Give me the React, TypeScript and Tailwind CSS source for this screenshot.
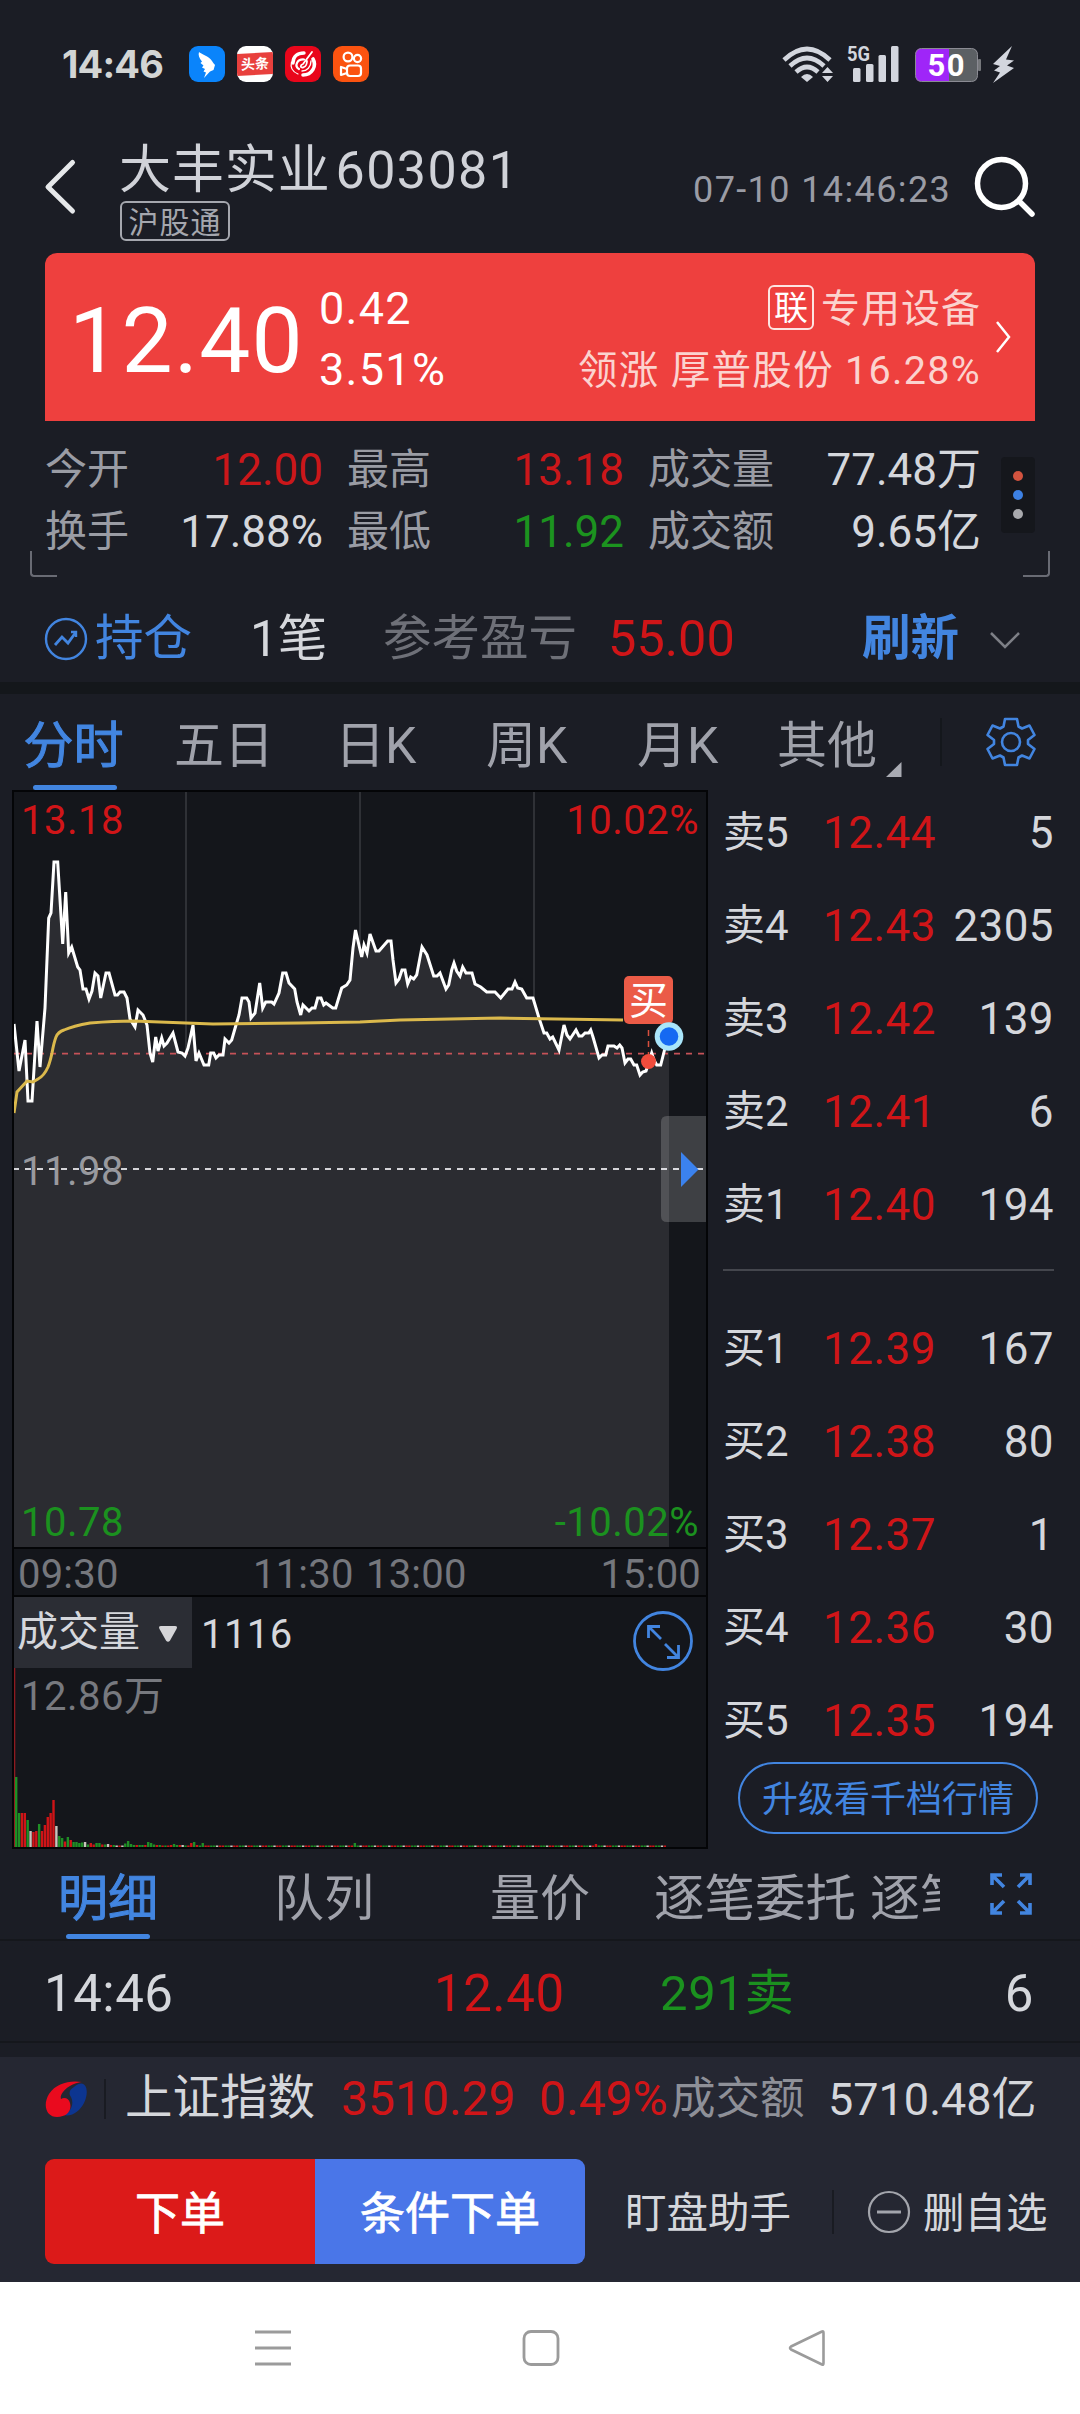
import { ReactNode } from 'react'

const sells = [
  ['卖5', '12.44', '5'],
  ['卖4', '12.43', '2305'],
  ['卖3', '12.42', '139'],
  ['卖2', '12.41', '6'],
  ['卖1', '12.40', '194'],
]

const buys = [
  ['买1', '12.39', '167'],
  ['买2', '12.38', '80'],
  ['买3', '12.37', '1'],
  ['买4', '12.36', '30'],
  ['买5', '12.35', '194'],
]

const PRICE =
  '14,1024 19,1071 25,1040 28,1101 32,1101 37,1021 40,1067 45,1008 48.7,918 51,913 54,862 57.7,862 62.7,944 65.7,892 68.7,953 71.7,947 77.7,967 80,970 83,989 86,989 89,999 92,991 95,973 98,976 100.7,998 106,973 109,973 115,995 117.5,995 120,992 124,992 127,998 130,1019 135,1027 138,1010 143,1015 147,1025 150,1053 152.7,1062 155.7,1037 158,1051 161.7,1038 164,1046 167,1043 173,1033 178,1052 182,1053 185,1056 188,1048 193,1025 196,1061 199,1053 204,1065 208.7,1065 210.7,1053 213.7,1053 216,1058 219,1055 223,1055 225,1039 229,1043 231.7,1040 236,1025 239,1015 242,998 246.7,998 249,1002 251,1018 255,1013 259.7,983 262.7,1008 265.7,1002 271.7,1002 274,1004 279,993 282.7,973 286,973 289,983 294.7,989 297,1002 300.7,1015 303,1005 309,1011 312,1008 315,1008 317.7,998 321,998 323.7,1005 326,1003 332.7,1008 335.7,1008 341.7,988 346.7,985 350,980 353,948 355.5,930 361.7,957 364,945 367,953 370,934 376,951 379,951 387.7,941 391,941 393,960 396,983 399,979 402,970 405,970 407.7,984 410.7,977 413.7,979 416.7,975 422,947 427,955 433.7,976 437,976 440,973 446,989 448.7,985 451.7,970 454,963 456.7,971 460,976 462.7,967 466,973 472,973 475,984 480.7,987 486.7,992 495,992 500.7,998 508,989 512,989 515,982 517.7,988 521.7,989 526.7,998 533,998 539,1018 544,1033 546.7,1033 550,1039 552.7,1037 559,1050 564,1025 567,1035 570,1039 576,1030 579,1036 582,1036 585,1033 588.7,1033 590.7,1030 593,1037 599,1058 602,1055 605.7,1055 608,1046 614,1046 617,1048 619.7,1045 622,1048 625,1063 628,1059 630.7,1059 634,1065 636.7,1065 640,1075 642.7,1072 646,1071 648,1065 651.7,1053 654,1060 656.7,1065 660.7,1065 664,1052 667,1040 669,1036'

const AVERAGE =
  'M14 1113L17 1092L27 1081L33 1082L38 1079Q44 1076 48 1067Q50 1062 52 1053Q54 1042 56 1037Q58 1032 64 1030Q73 1026 90 1023Q115 1021 133 1021L213 1024L300 1023L360 1022L400 1020L500 1018L623 1020'

// g = down, r = up, w = flat
const volume: [number, string][] = [
  [70, 'g'], [34, 'g'], [34, 'r'], [34, 'r'], [27, 'g'], [16, 'w'], [15, 'r'], [16, 'r'],
  [23, 'g'], [16, 'r'], [22, 'r'], [30, 'r'], [34, 'r'], [47, 'r'], [21, 'w'], [11, 'g'],
  [9, 'g'], [5.5, 'r'], [10, 'g'], [7, 'r'], [5, 'g'], [5, 'g'], [4, 'g'], [4.5, 'g'],
  [5, 'w'], [2.5, 'g'], [4, 'r'], [2.5, 'r'], [4, 'g'], [4, 'g'], [2.5, 'r'], [2.5, 'g'],
  [3, 'w'], [2, 'r'], [2, 'g'], [1.5, 'w'], [1.5, 'r'], [1.5, 'w'], [3.5, 'g'], [6, 'g'],
  [3, 'g'], [2, 'g'], [2, 'r'], [2, 'g'], [2, 'g'], [2, 'r'], [5, 'g'], [4, 'g'], [2.5, 'g'],
  [2, 'r'], [2, 'g'], [1.5, 'r'], [1.5, 'g'], [1.5, 'r'], [2, 'r'], [3, 'g'], [2, 'g'],
  [2, 'r'], [2, 'w'], [1.5, 'g'], [1.5, 'r'], [4, 'r'], [5, 'g'], [2, 'r'], [1.5, 'g'], [4, 'g'],
]
const TAIL = 'wgrwgrrrgwwrggrwggwrrgwgrwgggrrgrwg'
const volumeColor: Record<string, string> = { g: '#1f8f25', r: '#cf1417', w: '#c9c4bd' }

const volumeBars = Array.from({ length: 227 }, (_, i) => {
  const [h, c] = volume[i] ?? [i === 118 ? 4 : i === 202 ? 3 : 1.5, TAIL[(i * 7) % TAIL.length]]
  return { x: 15 + i * 2.87, h, color: volumeColor[c] }
})

function StatusBar() {
  return (
    <div className="flex h-32 items-center pl-[62px] pr-[64px]">
      <span className="w-[127px] font-['Inter'] text-[38px] leading-none font-bold tracking-[-0.8px] text-[#d3d5d4]">14:46</span>
      <div className="flex gap-3">
        <svg className="size-9" viewBox="0 0 36 36">
          <rect width="36" height="36" rx="9" fill="#0a84fb" />
          <path d="M10 6C12 8 20 10 23 15C24 17 25.500 18 26 19L24.500 24L21 25.500L15 32L17 26.500L14.500 25.500L16 23L13 21.500L14.500 19.500L11.500 17L13 15.500C10 12 9 9 10 6Z" fill="#fff" />
        </svg>
        <div className="flex size-9 items-center overflow-hidden rounded-[9px] bg-white">
          <div className="flex h-[22px] w-full -skew-y-3 items-center justify-center bg-[#e8403d] text-[14px] leading-none font-bold text-white">头条</div>
        </div>
        <svg className="size-9" viewBox="0 0 36 36" fill="none" stroke="#fff" strokeLinecap="round">
          <rect width="36" height="36" rx="9" fill="#e9061b" stroke="none" />
          <path d="M8 17C8 10 13 7 19 7" strokeWidth="3.400" />
          <path d="M6.500 16C5 22 8 26 13 28" strokeWidth="1.200" />
          <path d="M14 23C9 20 12 13 19 13.500" strokeWidth="2.200" />
          <path d="M27 6L18 18C15 19 15 22 18 21.500C21 21 22 17 22 15" strokeWidth="1.800" />
          <path d="M28 13C32 20 27 29 18 29" strokeWidth="3.600" />
          <path d="M26 15C26 21 22 25 17 25" strokeWidth="1.400" />
        </svg>
        <svg className="size-9" viewBox="0 0 36 36" fill="none" stroke="#fff" strokeWidth="2.200">
          <rect width="36" height="36" rx="9" fill="#fb5310" stroke="none" />
          <circle cx="15" cy="11" r="4.400" />
          <circle cx="24.500" cy="12.500" r="3.600" />
          <rect x="14" y="19.500" width="14" height="10.500" rx="3" />
          <path d="M14 23L8 21V29L14 27" strokeLinejoin="round" />
        </svg>
      </div>
      <svg className="ml-auto h-[60px] w-[234px]" viewBox="782 34 234 60" fill="#d3d6de">
        <g fill="none" stroke="#d3d6de" strokeWidth="4.600">
          <path d="M784 60Q807 38 830 60" />
          <path d="M790 66Q807 50 824 66" />
          <path d="M796 72Q807 62 818 72" />
        </g>
        <path d="M801 77Q807 71 813 77L807 82Z" />
        <path d="M822 73L827.500 67L833 73ZM822 76H833L827.500 82Z" />
        <text x="847" y="60.500" fontSize="20" fontWeight="700" textLength="23" lengthAdjust="spacingAndGlyphs" fontFamily="Roboto">5G</text>
        <rect x="853" y="68" width="7.500" height="14" rx="1.500" />
        <rect x="866" y="64" width="7.500" height="18" rx="1.500" />
        <rect x="878.500" y="55" width="7.500" height="27" rx="1.500" />
        <rect x="891" y="46" width="7.500" height="36" rx="1.500" />
        <path d="M921 48.500H949V81.500H921Q915.500 81.500 915.500 76V54Q915.500 48.500 921 48.500Z" fill="#9f25f8" />
        <path d="M949 48.500H972Q977.500 48.500 977.500 54V76Q977.500 81.500 972 81.500H949Z" fill="#5c6064" />
        <rect x="915.500" y="48.500" width="62" height="33" rx="6" fill="none" stroke="#8b8b93" />
        <rect x="978" y="59" width="3" height="12" rx="1" fill="#75777b" />
        <text x="927.500" y="76" fontSize="31" fontWeight="700" fill="#fff" textLength="37" fontFamily="Roboto">50</text>
        <path d="M1012 46L993 64L1000 66L994 70.500L1000 72.500L993 83L1014 68L1007 65.500L1014 60.500L1006 59.500Z" />
      </svg>
    </div>
  )
}

function Header() {
  return (
    <div className="flex h-[125px] pl-[43px]">
      <svg className="mt-[29px] h-[60px] w-[76px]" viewBox="0 0 76 60" fill="none" stroke="#e6e8ea" strokeWidth="5" strokeLinecap="round" strokeLinejoin="round">
        <path d="M29.500 5.500L5 30L29.500 54" />
      </svg>
      <div className="mt-[17px] flex w-[574px] flex-col items-start">
        <h1 className="text-[52px] leading-none tracking-[0.9px] whitespace-nowrap text-[#d0d2d8]">
          大丰实业<span className="ml-[5px] tracking-[1.4px]">603081</span>
        </h1>
        <span className="mt-1 ml-[1px] flex h-10 w-[110px] items-center justify-center rounded-md border-2 border-[#a5a7ae] pt-[3px] text-[30px] leading-none tracking-[1px] text-[#a5a7ae]">沪股通</span>
      </div>
      <span className="mt-[44px] w-[279px] text-[36px] leading-none tracking-[1.4px] whitespace-nowrap text-[#9a9ca5]">07-10 14:46:23</span>
      <svg className="mt-[27px] size-[64px]" viewBox="972 155 64 64" fill="none" stroke="#fff" strokeLinecap="round">
        <circle cx="1001.500" cy="183.500" r="24" strokeWidth="5.500" />
        <path d="M1019 201L1032 214" strokeWidth="5.500" />
      </svg>
    </div>
  )
}

function PriceCard() {
  return (
    <div className="mx-[45px] flex h-[168px] rounded-t-xl bg-[#ee403e] text-white">
      <span className="mt-[43px] ml-[24px] w-[250px] text-[91px] leading-none tracking-[1.3px]">12.40</span>
      <div className="mt-[33px] text-[45px] leading-none tracking-[1.3px]">
        <div className="mb-4">0.42</div>
        <div>3.51%</div>
      </div>
      <div className="mt-[31px] mr-[14px] ml-auto flex flex-col items-end text-[39px] leading-none tracking-[1px] text-[#fbd3cf]">
        <div className="flex h-[46px] items-center">
          <span className="mr-[7px] flex h-[45px] w-[46px] items-center justify-center rounded-md border-2 border-[#fde4e2] pt-[2px] text-[34px] leading-none tracking-normal text-white">联</span>
          <span className="pt-[4px]">专用设备</span>
        </div>
        <div className="mt-[21px] text-[39.500px] tracking-[1.3px]">领涨 厚普股份 16.28%</div>
      </div>
      <svg className="mt-[67px] mr-[23px] h-[34px] w-[17px]" viewBox="0 0 17 34" fill="none" stroke="#fff" strokeWidth="2.500">
        <path d="M2 2L14 17L2 32" />
      </svg>
    </div>
  )
}

function Stat({ label, value, color = 'text-[#d5d7dc]' }: { label: string; value: string; color?: string }) {
  return (
    <div className="flex items-center justify-between whitespace-nowrap">
      <span className="text-[42px] leading-none text-[#9a9ca4]">{label}</span>
      <span className={`text-[44px] leading-none ${color}`}>{value}</span>
    </div>
  )
}

function Stats() {
  return (
    <div className="relative flex h-[156px] pt-[18px] pl-[45px]">
      <div className="grid h-[124px] grid-cols-[278px_277px_333px] grid-rows-2 gap-x-[24px]">
        <Stat label="今开" value="12.00" color="text-[#cb171a]" />
        <Stat label="最高" value="13.18" color="text-[#cb171a]" />
        <Stat label="成交量" value="77.48万" />
        <Stat label="换手" value="17.88%" />
        <Stat label="最低" value="11.92" color="text-[#1c931f]" />
        <Stat label="成交额" value="9.65亿" />
      </div>
      <div className="mt-[18px] ml-[20px] flex h-[76px] w-[34px] flex-col items-center justify-center gap-[9px] rounded bg-[#15171c]">
        <i className="size-[10px] rounded-full bg-[#d2533f]" />
        <i className="size-[10px] rounded-full bg-[#3d81e4]" />
        <i className="size-[10px] rounded-full bg-[#a9aaae]" />
      </div>
      <div className="absolute bottom-0 left-[30px] h-[26px] w-[27px] rounded-bl-sm border-b-2 border-l-2 border-[#696b74]" />
      <div className="absolute right-[30px] bottom-0 h-[26px] w-[27px] rounded-br-sm border-r-2 border-b-2 border-[#696b74]" />
    </div>
  )
}

function Position() {
  return (
    <div className="flex h-[105px] items-center pt-[20px] pl-[44px] text-[48.500px] leading-none whitespace-nowrap">
      <svg className="-mt-[2px] size-[44px]" viewBox="0 0 44 44" fill="none" stroke="#4285e0" strokeWidth="2.400">
        <circle cx="22" cy="22" r="20" />
        <path d="M11 28L18 20L24 26L32 15" strokeWidth="2.800" />
        <path d="M27 15H32V20" />
      </svg>
      <span className="ml-[7px] w-[155px] text-[#4285e0]">持仓</span>
      <span className="w-[133px] text-[49.500px] text-[#d5d7dc]">1笔</span>
      <span className="w-[225px] text-[#6e7078]">参考盈亏</span>
      <span className="w-[254px] text-[50.500px] text-[#d01518]">55.00</span>
      <span className="w-[126px] font-bold text-[#4285e0]">刷新</span>
      <svg className="h-[20px] w-[34px]" viewBox="0 0 34 20" fill="none" stroke="#7d7f86" strokeWidth="2.500">
        <path d="M3 3L17 17L31 3" />
      </svg>
    </div>
  )
}

function PeriodTabs() {
  return (
    <div className="flex h-[96px] items-stretch text-[50px] leading-none whitespace-nowrap text-[#a0a2ab]">
      <div className="flex w-[150px] flex-col items-center pt-[27px] text-[#4285e0]">
        <span className="-ml-[3px] [-webkit-text-stroke:1px]">分时</span>
        <i className="mt-[14px] h-[5px] w-[84px] rounded-sm bg-[#4285e0]" />
      </div>
      <div className="w-[147px] pt-[27px] pl-[24px]">五日</div>
      <div className="w-[147px] pt-[27px] pl-[38px]">日K</div>
      <div className="w-[147px] pt-[27px] pl-[42px]">周K</div>
      <div className="w-[147px] pt-[27px] pl-[46px]">月K</div>
      <div className="flex pt-[27px] pl-[39px]">
        其他
        <svg className="mt-[41px] ml-[9px] h-[15px] w-[16px]" viewBox="0 0 16 15">
          <path d="M15.500 0V15H0Z" fill="#a9abb3" />
        </svg>
      </div>
      <i className="mt-[24px] ml-[38px] h-[48px] w-[2px] bg-[#14171c]" />
      <svg className="mt-[22px] ml-[43px] size-[52px]" viewBox="-26 -26 52 52" fill="none" stroke="#4285e0" strokeWidth="2.600" strokeLinejoin="round">
        <path d="M-6 -23H6L7.500 -15.500L11 -13.500L18.500 -16.500L23.500 -7L17 -2V2L23.500 7L18.500 16.500L11 13.500L7.500 15.500L6 23H-6L-7.500 15.500L-11 13.500L-18.500 16.500L-23.500 7L-17 2V-2L-23.500 -7L-18.500 -16.500L-11 -13.500L-7.500 -15.500Z" />
        <circle r="9" />
      </svg>
    </div>
  )
}

function ChartLabel({ className, children }: { className: string; children: ReactNode }) {
  return <span className={`absolute text-[40px] leading-none tracking-[0.5px] ${className}`}>{children}</span>
}

function PriceChart() {
  return (
    <div className="relative h-[757px] border-b-2 border-[#040507]">
      <svg className="block h-[755px] w-[692px]" viewBox="14 792 692 755">
        <path d="M186 792V1546M360 792V1546M534 792V1546" stroke="#2f3136" strokeWidth="2" />
        <polygon points={`14,1547 ${PRICE} 669,1547`} fill="#2b2c31" />
        <path d="M14 1053.700H706" stroke="#c65258" strokeWidth="1.700" strokeDasharray="6 6" />
        <path d="M14 1169H706" stroke="#d4d4d8" strokeWidth="2" strokeDasharray="6 6" strokeDashoffset="1" />
        <polyline points={PRICE} fill="none" stroke="#fff" strokeWidth="3" />
        <path d={AVERAGE} fill="none" stroke="#dbb94c" strokeWidth="3" />
        <path d="M648.500 1030V1054" stroke="#d9503f" strokeWidth="1.500" strokeDasharray="6 5" />
        <circle cx="648.500" cy="1061.500" r="7.500" fill="#f04c3c" />
        <rect x="624" y="976" width="49" height="48" rx="5" fill="#eb5b47" />
        <circle cx="669" cy="1036.500" r="14.300" fill="#a9e5fa" />
        <circle cx="669" cy="1036.500" r="9.300" fill="#1569f2" />
        <path d="M707 1116H667Q661 1116 661 1122V1216Q661 1222 667 1222H707Z" fill="#fff" fillOpacity="0.18" />
        <path d="M681 1152L698.500 1169.500L681 1187Z" fill="#3b82ee" />
      </svg>
      <ChartLabel className="top-[9px] left-[7px] text-[#d01518]">13.18</ChartLabel>
      <ChartLabel className="top-[9px] right-[7px] text-[#d01518]">10.02%</ChartLabel>
      <ChartLabel className="top-[360px] left-[7px] text-[#98999e]">11.98</ChartLabel>
      <ChartLabel className="top-[711px] left-[7px] text-[#1b911f]">10.78</ChartLabel>
      <ChartLabel className="top-[711px] right-[7px] text-[#1b911f]">-10.02%</ChartLabel>
      <span className="absolute top-[190px] left-[615px] text-[39px] leading-none text-white">买</span>
    </div>
  )
}

function VolumeChart() {
  return (
    <div className="relative h-[250px]">
      <svg className="absolute inset-0 h-[250px] w-[692px]" viewBox="14 1597 692 250">
        <rect x="14" y="1667" width="1.300" height="180" fill="#8f1a20" />
        {volumeBars.map((b) => (
          <rect key={b.x} x={b.x} y={1847 - b.h} width="2.400" height={b.h} fill={b.color} />
        ))}
      </svg>
      <div className="relative flex">
        <div className="flex h-[71px] w-[178px] items-center bg-[#2b2d34] pl-[3px] text-[41px] leading-none text-[#d5d7dc]">
          成交量
          <svg className="mt-[2px] ml-[18px] h-[18px] w-[20px]" viewBox="0 0 20 18">
            <path d="M3 1H17Q20 1 18.500 4L12 15.500Q10 18 8 15.500L1.500 4Q0 1 3 1Z" fill="#d5d5d8" />
          </svg>
        </div>
        <span className="mt-[18px] ml-[9px] text-[40px] leading-none tracking-[0.4px] text-[#d5d7dc]">1116</span>
        <svg className="mt-[14px] ml-auto mr-[13px] size-[60px]" viewBox="0 0 60 60" fill="none" stroke="#4285e0" strokeWidth="2.800">
          <circle cx="30" cy="30" r="28.500" />
          <path d="M15.500 27V15.500H27M16 16L28 28M32 33L45 46M34 46.500H45.500V34" />
        </svg>
      </div>
      <div className="relative mt-[6px] ml-[7px] text-[40px] leading-none tracking-[0.5px] text-[#77797f]">12.86万</div>
    </div>
  )
}

function ChartPanel() {
  return (
    <div className="ml-[12px] w-[696px] border-2 border-[#040507] bg-[#14161b]">
      <PriceChart />
      <div className="flex h-[48px] items-center border-b-2 border-[#040507] pt-[5px] pr-[5px] pl-[4px] text-[40px] leading-none tracking-[0.2px] text-[#75777d]">
        <span className="w-[235px]">09:30</span>
        <span className="w-[113px]">11:30</span>
        <span>13:00</span>
        <span className="ml-auto">15:00</span>
      </div>
      <VolumeChart />
    </div>
  )
}

function BookRow({ row }: { row: string[] }) {
  return (
    <div className="flex h-[93px] items-center leading-none">
      <span className="w-[100px] text-[42px] text-[#d5d7dc]">{row[0]}</span>
      <span className="text-[44px] tracking-[0.5px] text-[#d01518]">{row[1]}</span>
      <span className="ml-auto text-[44px] tracking-[0.4px] text-[#d5d7dc]">{row[2]}</span>
    </div>
  )
}

function OrderBook() {
  return (
    <div className="ml-[15px] w-[331px]">
      <div className="-mt-[4px]">
        {sells.map((r) => <BookRow key={r[0]} row={r} />)}
      </div>
      <div className="mt-[18px] mb-[31px] h-[2px] bg-[#44464d]" />
      {buys.map((r) => <BookRow key={r[0]} row={r} />)}
      <button className="-mt-[5px] ml-[15px] flex h-[72px] w-[300px] items-center justify-center rounded-full border-2 border-[#4285e0] pt-[3px] text-[36px] leading-none whitespace-nowrap text-[#4285e0]">
        升级看千档行情
      </button>
    </div>
  )
}

function DetailTabs() {
  return (
    <div className="flex h-[92px] border-b-2 border-[#15171c] text-[50px] leading-none whitespace-nowrap text-[#a0a2ab]">
      <div className="flex w-[216px] flex-col items-center pt-[25px] text-[#4285e0]">
        <span className="[-webkit-text-stroke:1px]">明细</span>
        <i className="mt-[10px] h-[5px] w-[84px] rounded-sm bg-[#4285e0]" />
      </div>
      <div className="w-[216px] pt-[25px] text-center">队列</div>
      <div className="w-[216px] pt-[25px] text-center">量价</div>
      <div className="flex w-[292px] overflow-hidden pt-[25px] pl-[6px]">
        <span className="mr-[14px] text-[50.500px]">逐笔委托</span>
        <span>逐笔成交</span>
      </div>
      <svg className="mt-[22px] ml-[48px] size-[46px]" viewBox="0 0 46 46" fill="none" stroke="#4285e0" strokeWidth="3.600">
        <path d="M4 14V4H14M4 4L16 16M32 4H42V14M42 4L30 16M4 32V42H14M4 42L16 30M32 42H42V32M42 42L30 30" />
      </svg>
    </div>
  )
}

function DetailRow() {
  return (
    <div className="flex h-[102px] items-center border-b-2 border-[#15171c] pt-[4px] pr-[46px] pl-[44px] text-[51px] leading-none tracking-[0.5px] text-[#d5d7dc]">
      <span className="w-[390px]">14:46</span>
      <span className="w-[226px] text-[#d01518]">12.40</span>
      <span className="text-[49px] tracking-[0.7px] text-[#1b911f]">291卖</span>
      <span className="ml-auto">6</span>
    </div>
  )
}

function Footer() {
  return (
    <div className="mt-[14px] h-[225px] bg-[#252732] leading-none whitespace-nowrap">
      <div className="flex h-[84px] items-center pl-[44px]">
        <svg className="h-[40px] w-[44px]" viewBox="0 0 44 40">
          <path d="M30 8C42 -2 46 12 40 24C36 32 28 38 20 36C28 32 30 24 27 18C24 14 26 10 30 8Z" fill="#0d3590" />
          <path d="M38 3C26 1 12 4 5 15C-2 27 3 38 13 38C23 38 28 32 26 24C25 19 20 18 17 20C15 14 26 4 38 3Z" fill="#ea0a1e" />
        </svg>
        <i className="mr-[19px] ml-[16px] h-[40px] w-[2px] bg-[#191b22]" />
        <span className="w-[216px] text-[47.500px] text-[#d5d7dc]">上证指数</span>
        <span className="w-[198px] text-[48px] text-[#d01518]">3510.29</span>
        <span className="w-[132px] text-[48px] text-[#d01518]">0.49%</span>
        <span className="w-[157px] text-[44.500px] text-[#8e9098]">成交额</span>
        <span className="text-[45px] text-[#d5d7dc]">5710.48亿</span>
      </div>
      <div className="mt-[18px] flex items-center pl-[45px]">
        <div className="flex h-[105px] overflow-hidden rounded-[9px] text-[45px] text-white [-webkit-text-stroke:0.8px]">
          <button className="w-[270px] bg-[#dc1a19] pt-[5px]">下单</button>
          <button className="w-[270px] bg-[#4a76e8] pt-[5px]">条件下单</button>
        </div>
        <span className="ml-[40px] w-[207px] pt-[5px] text-[41.500px] text-[#d5d7dc]">盯盘助手</span>
        <i className="h-[44px] w-[2px] bg-[#191b22]" />
        <svg className="ml-[33px] size-[44px]" viewBox="0 0 44 44" fill="none" stroke="#a3a5ac" strokeWidth="2.200">
          <circle cx="22" cy="22" r="20" />
          <path d="M10 22H34" strokeWidth="3" />
        </svg>
        <span className="ml-[12px] pt-[5px] text-[41.500px] text-[#d5d7dc]">删自选</span>
      </div>
    </div>
  )
}

function SystemNav() {
  return (
    <div className="flex h-[132px] items-center justify-between bg-white pr-[253px] pl-[253px]">
      <svg className="size-10" viewBox="0 0 40 40" stroke="#9b9b9b" strokeWidth="2.800">
        <path d="M2 4H38M2 20H38M2 36H38" />
      </svg>
      <svg className="size-10" viewBox="0 0 40 40" fill="none" stroke="#9b9b9b" strokeWidth="2.800">
        <rect x="4" y="3.500" width="34" height="33" rx="7" />
      </svg>
      <svg className="size-10" viewBox="0 0 40 40" fill="none" stroke="#9b9b9b" strokeWidth="2.600" strokeLinejoin="round">
        <path d="M35 3.500Q36.500 2.500 36.500 5V35Q36.500 37.500 35 36.500L4 21.500Q2 20 4 18.500Z" />
      </svg>
    </div>
  )
}

export default function App() {
  return (
    <div className="h-[2414px] w-[1080px] overflow-hidden bg-[#1b1d25] font-['Roboto','Noto_Sans_CJK_SC',sans-serif]">
      <StatusBar />
      <Header />
      <PriceCard />
      <Stats />
      <Position />
      <div className="h-[12px] bg-[#14171b]" />
      <PeriodTabs />
      <div className="flex h-[1059px]">
        <ChartPanel />
        <OrderBook />
      </div>
      <DetailTabs />
      <DetailRow />
      <Footer />
      <SystemNav />
    </div>
  )
}
